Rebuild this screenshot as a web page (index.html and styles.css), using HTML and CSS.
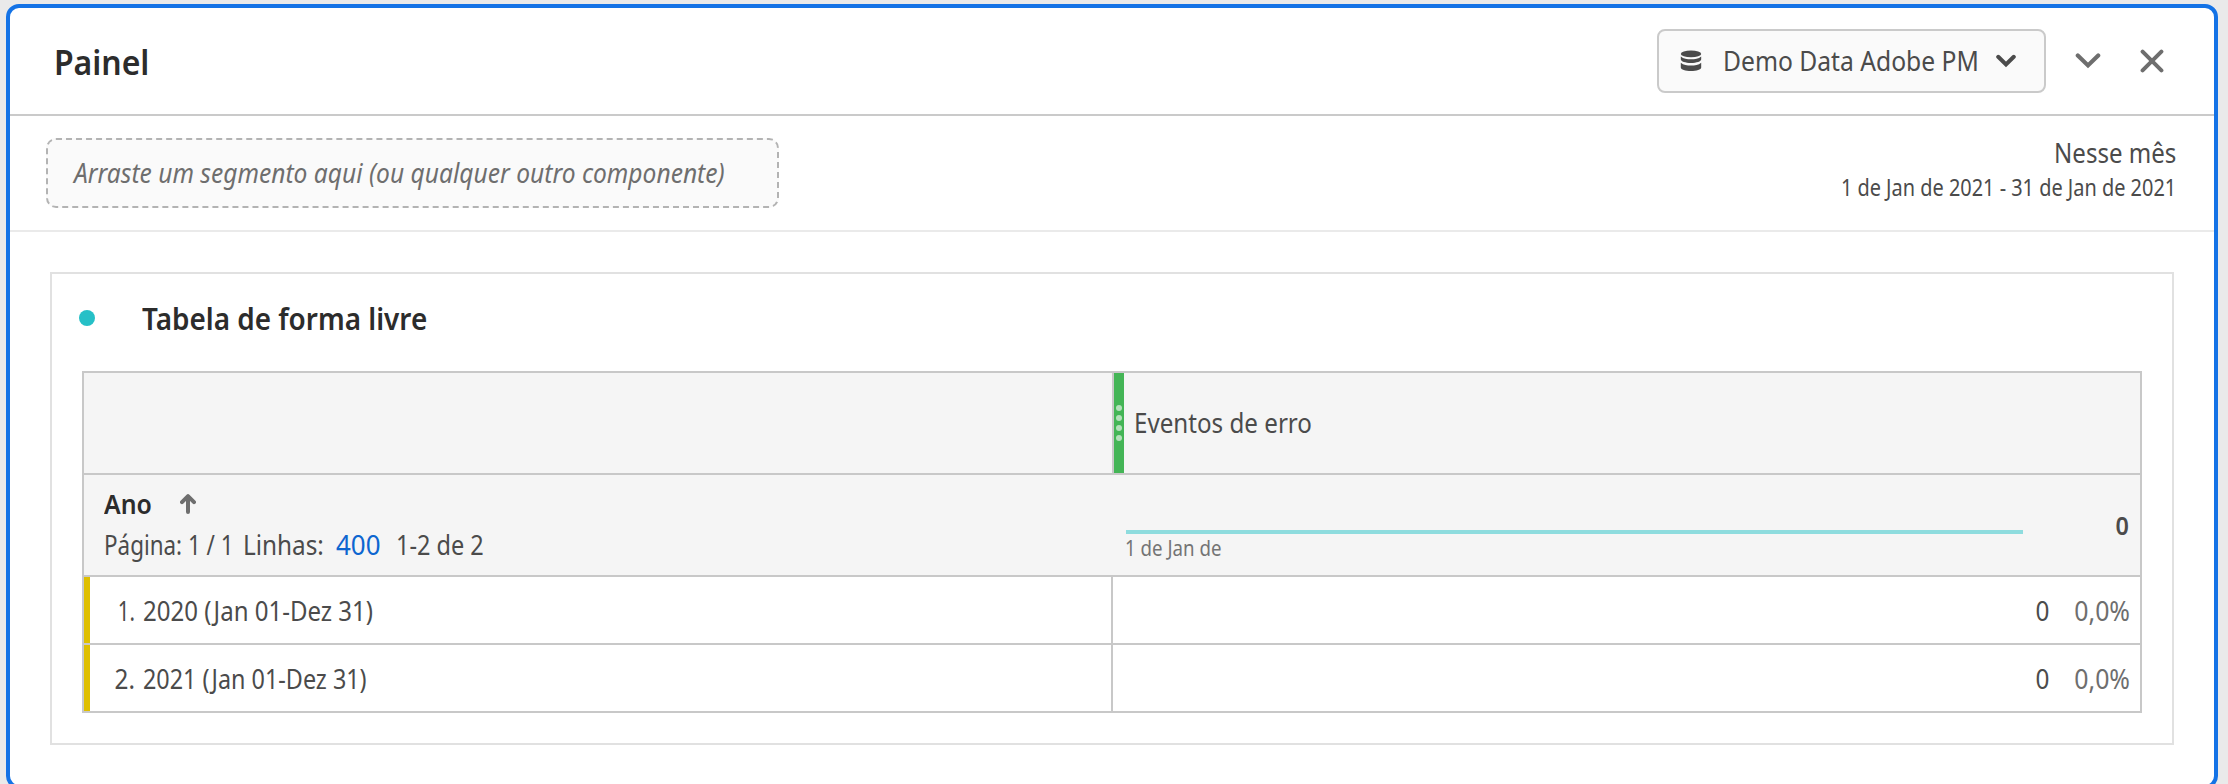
FILE: index.html
```html
<!DOCTYPE html>
<html lang="pt-BR">
<head>
<meta charset="utf-8">
<title>Painel</title>
<link rel="stylesheet" href="styles.css">
</head>
<body>
<main class="panel">
  <header class="panel-header">
    <h1 class="panel-title text">Painel</h1>
    <div class="panel-actions">
      <button class="suite-picker">
        <svg class="icon-data" width="22" height="22" viewBox="0 0 22 22" fill="#4b4b4b">
          <ellipse cx="11" cy="3.9" rx="10.2" ry="3.4"/>
          <path d="M.8 6.4C3.500 8.800 7 9.300 11 9.300S18.500 8.800 21.200 6.400V9.300C21.200 11.500 16.500 13 11 13S.8 11.500.8 9.300Z"/>
          <path d="M.8 12.700C3.500 15 7 15.500 11 15.500S18.500 15 21.200 12.700V17.500C21.200 19.700 16.500 21 11 21S.8 19.700.8 17.500Z"/>
        </svg>
        <span class="suite-name text">Demo Data Adobe PM</span>
        <svg class="icon-caret" width="20" height="14" viewBox="0 0 20 14" fill="none" stroke="#4b4b4b" stroke-width="4" stroke-linecap="round" stroke-linejoin="miter"><path d="M2.200 2.800 10 10.400 17.800 2.800"/></svg>
      </button>
      <svg class="icon-collapse" width="26" height="18" viewBox="0 0 26 18" fill="none" stroke="#6e6e6e" stroke-width="4.200" stroke-linecap="round"><path d="M2.800 3.400 13 13.400 23.200 3.400"/></svg>
      <svg class="icon-close" width="24" height="24" viewBox="0 0 24 24" fill="none" stroke="#6e6e6e" stroke-width="4" stroke-linecap="round"><path d="M2.600 2.600 21.400 21.400M21.400 2.600 2.600 21.400"/></svg>
    </div>
  </header>

  <section class="filters">
    <div class="dropzone"><span class="dropzone-hint text">Arraste um segmento aqui (ou qualquer outro componente)</span></div>
    <div class="period">
      <div class="period-name text">Nesse mês</div>
      <div class="period-range text">1 de Jan de 2021 - 31 de Jan de 2021</div>
    </div>
  </section>

  <section class="card">
    <div class="card-head">
      <span class="card-dot"></span>
      <h2 class="card-title text">Tabela de forma livre</h2>
    </div>
    <div class="table">
      <div class="row row-metric">
        <div class="cell-left"></div>
        <div class="cell-metric">
          <div class="handle"><i></i><i></i><i></i><i></i></div>
          <span class="metric-name text">Eventos de erro</span>
        </div>
      </div>
      <div class="row row-summary">
        <div class="dimension">
          <div class="dimension-line">
            <span class="dimension-name text">Ano</span>
            <svg width="16" height="20" viewBox="0 0 16 20" fill="none" stroke="#6e6e6e" stroke-width="4" stroke-linecap="round" stroke-linejoin="round"><path d="M8 2.200V18M2 8.200 8 2.200 14 8.200"/></svg>
          </div>
          <div class="paging">
            <span class="paging-page text">Página: 1 / 1</span>
            <span class="paging-label text">Linhas:</span>
            <a class="paging-rows text">400</a>
            <span class="paging-range text">1-2 de 2</span>
          </div>
        </div>
        <div class="spark">
          <div class="spark-line"></div>
          <span class="spark-label text">1 de Jan de</span>
        </div>
        <span class="total text">0</span>
      </div>
      <div class="row row-item">
        <div class="item-name"><span class="index index-first text">1.</span><span class="label text">2020 (Jan 01-Dez 31)</span></div>
        <div class="item-value"><span class="value text">0</span><span class="percent text">0,0%</span></div>
      </div>
      <div class="row row-item">
        <div class="item-name"><span class="index text">2.</span><span class="label label-narrow text">2021 (Jan 01-Dez 31)</span></div>
        <div class="item-value"><span class="value text">0</span><span class="percent text">0,0%</span></div>
      </div>
    </div>
  </section>
</main>
</body>
</html>
```
FILE: styles.css
```css
* { box-sizing: border-box; }
html, body { height: 100%; }
body {
  margin: 0;
  padding: 4px 10px 0 6px;
  overflow: hidden;
  background: #eaeaea;
  color: #4b4b4b;
  font: 27px/32px "Noto Sans", "Open Sans", sans-serif;
}
h1, h2 { margin: 0; }
svg { display: block; flex: none; }

/* Narrows the letterforms; --w is the horizontal scale */
.text {
  display: block;
  flex: none;
  white-space: nowrap;
  transform: scaleX(var(--w, 0.9));
  transform-origin: left center;
}

.panel {
  height: 785px;
  border: 4px solid #1473e6;
  border-radius: 13px;
  background: #fff;
}

.panel-header {
  display: flex;
  align-items: center;
  justify-content: space-between;
  height: 108px;
  padding: 0 50px 0 42px;
  border-bottom: 2px solid #cacaca;
}
.panel-title { --w: 0.94; padding: 2px 0 0 2px; font-size: 34px; font-weight: 600; color: #2c2c2c; }
.panel-actions { display: flex; align-items: center; }
.suite-picker {
  display: flex;
  align-items: center;
  width: 389px;
  height: 64px;
  padding: 0 0 0 21px;
  border: 2px solid #cacaca;
  border-radius: 8px;
  background: #fafafa;
  color: inherit;
  font: inherit;
}
.suite-name { --w: 0.913; width: 273px; margin-left: 21px; text-align: left; }
.icon-collapse { margin-left: 29px; }
.icon-close { margin-left: 39px; }

.filters {
  display: flex;
  justify-content: space-between;
  height: 116px;
  padding: 21px 38px 0 36px;
  border-bottom: 2px solid #eaeaea;
}
.dropzone {
  display: flex;
  align-items: center;
  width: 733px;
  height: 70px;
  margin-top: 1px;
  padding-left: 26px;
  border: 2px dashed #b3b3b3;
  border-radius: 10px;
  background: #fafafa;
}
.dropzone-hint { --w: 0.91; font-style: italic; color: #6e6e6e; }
.period { display: flex; flex-direction: column; align-items: flex-end; gap: 2px; }
.period .text { transform-origin: right center; }
.period-name { --w: 0.89; }
.period-range { --w: 0.866; font-size: 23px; }

.card {
  width: 2124px;
  height: 473px;
  margin: 40px 0 0 40px;
  padding: 0 30px;
  border: 2px solid #e1e1e1;
}
.card-head { display: flex; align-items: center; height: 88px; margin-bottom: 9px; }
.card-dot { width: 16px; height: 16px; margin-left: -3px; border-radius: 50%; background: #26c0c7; }
.card-title { --w: 0.93; margin-left: 47px; padding-top: 2px; font-size: 30px; font-weight: 600; color: #2c2c2c; }

.table { border: 2px solid #c8c8c8; }
.row { display: flex; border-bottom: 2px solid #c8c8c8; }
.row:last-child { border-bottom: 0; }
.row-metric, .row-summary { height: 102px; background: #f5f5f5; }
.cell-left { width: 1030px; border-right: 2px solid #c8c8c8; }
.cell-metric { display: flex; align-items: center; }
.handle {
  display: flex;
  flex-direction: column;
  align-items: center;
  justify-content: center;
  gap: 4px;
  width: 10px;
  height: 100px;
  background: #44b556;
}
.handle i { width: 6px; height: 6px; border-radius: 50%; background: #b4e1bb; }
.metric-name { --w: 0.895; margin-left: 10px; }

.dimension { width: 1042px; padding: 8px 0 0 20px; line-height: 41px; }
.dimension-line { display: flex; align-items: center; }
.dimension-name { --w: 0.92; width: 76px; font-weight: 600; color: #2c2c2c; }
.paging { display: flex; }
.paging-page { --w: 0.83; width: 139px; }
.paging-label { width: 93px; }
.paging-rows { --w: 0.96; width: 60px; color: #0d66d0; }
.paging-range { --w: 0.87; }
.spark { width: 897px; padding-top: 55px; }
.spark-line { height: 4px; background: #8edcde; }
.spark-label { --w: 0.89; margin-left: -1px; font-size: 21px; line-height: 28px; color: #747474; }
.total { width: 106px; line-height: 100px; font-weight: 600; font-size: 26px; text-align: right; transform-origin: right center; }

.row-item { height: 68px; line-height: 67px; }
.row-item:last-child { height: 66px; }
.item-name { display: flex; width: 1029px; border-left: 6px solid #dfbf00; border-right: 2px solid #c8c8c8; }
.index { width: 45px; text-align: right; transform-origin: right center; }
.index-first { --w: 0.76; }
.label { --w: 0.89; margin-left: 8px; }
.label-narrow { --w: 0.865; }
.item-value { display: flex; flex: 1; justify-content: flex-end; padding-right: 10px; }
.value { transform-origin: right center; }
.percent { --w: 0.92; width: 81px; text-align: right; color: #6e6e6e; transform-origin: right center; }
```
